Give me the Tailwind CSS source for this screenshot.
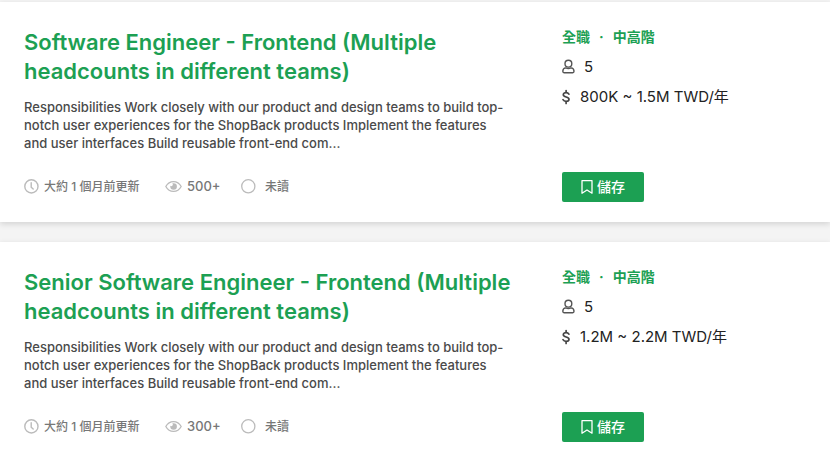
<!DOCTYPE html>
<html lang="zh-Hant">
<head>
  <meta charset="UTF-8" />
  <meta name="viewport" content="width=device-width, initial-scale=1" />
  <title>職缺列表</title>
  <script src="https://cdn.jsdelivr.net/npm/@tailwindcss/browser@4"></script>
</head>
<body class="min-h-screen bg-[#f4f4f4] font-['Inter','Noto_Sans_CJK_TC',sans-serif] text-[#222]">

  <!-- Icons -->
  <svg class="hidden" aria-hidden="true">
    <symbol id="icon-clock" viewBox="0 0 16 16" fill="none" stroke="currentColor" stroke-width="1.4" stroke-linecap="round" stroke-linejoin="round">
      <circle cx="7.4" cy="7.4" r="6.6" />
      <path d="M7.2 3.8v4.4l2 1.9" />
    </symbol>
    <symbol id="icon-eye" viewBox="0 0 18 16">
      <path d="M.8 7.5C2.6 4.3 5.5 2.6 8.5 2.6s5.9 1.7 7.7 4.9c-1.8 3.2-4.7 4.9-7.7 4.9S2.6 10.7.8 7.5z" fill="none" stroke="currentColor" stroke-width="1.3" stroke-linejoin="round" />
      <path d="M8.6 4.2A3.3 3.3 0 1 1 5.3 7.5c0-.3 0-.5.1-.7a1.3 1.3 0 0 0 1.9-2.3c.4-.2.8-.3 1.3-.3z" fill="currentColor" />
    </symbol>
    <symbol id="icon-circle" viewBox="0 0 16 16" fill="none" stroke="currentColor" stroke-width="1.3">
      <circle cx="8.3" cy="7.3" r="6.6" />
    </symbol>
    <symbol id="icon-user" viewBox="-1 0 14 16" fill="none" stroke="currentColor" stroke-width="1.4" stroke-linejoin="round">
      <circle cx="5.4" cy="4.7" r="3.4" />
      <path d="M2.8 8.9C.5 9.1-.2 10.5-.2 12.3c0 .9.4 1.4 1.2 1.4h8.8c.8 0 1.2-.5 1.2-1.4 0-1.800-.7-3.200-3-3.400-1.600.8-3.600.8-5.200 0z" />
    </symbol>
    <symbol id="icon-dollar" viewBox="-1 0 10 16" fill="none" stroke="currentColor" stroke-width="1.7" stroke-linecap="round" stroke-linejoin="round">
      <path d="M5.9 5.2C5.3 4.1 4.4 3.6 3.1 3.6 1.500 3.6.3 4.4.3 5.7c0 3 5.700 1.500 5.700 4.500 0 1.300-1.200 2.200-2.900 2.200-1.500 0-2.500-.6-3.100-1.700M3.100 1.600v2M3.100 12.400v2" />
    </symbol>
    <symbol id="icon-bookmark" viewBox="0 0 12 16" fill="none" stroke="currentColor" stroke-width="1.3" stroke-linejoin="round">
      <path d="M1 1.6h10v12.600l-5-3.200-5 3.200z" />
    </symbol>
  </svg>

  <main class="flex flex-col gap-5 pt-0.5">

    <article class="flex gap-10 bg-white px-6 pt-[26px] pb-5 shadow-[0_2px_6px_rgba(0,0,0,0.14)]">
      <div class="flex flex-1 flex-col">
        <h2 class="text-[22px] leading-[29px] font-semibold text-[#1ca053]"><a href="#">Software Engineer - Frontend (Multiple<br>headcounts in different teams)</a></h2>
        <p class="mt-3 text-[13px] leading-[18px] font-medium whitespace-nowrap text-[#4a4a4a]">Responsibilities Work closely with our product and design teams to build top-<br>notch user experiences for the ShopBack products Implement the features<br>and user interfaces Build reusable front-end com...</p>
        <ul class="mt-auto flex h-[30px] items-center text-xs font-medium text-[#777]">
          <li class="flex w-[141px] items-center gap-1"><svg class="size-4 text-[#bbb]"><use href="#icon-clock" /></svg>大約 1 個月前更新</li>
          <li class="flex w-[75px] items-center gap-1 text-[13px]"><svg class="h-4 w-[18px] text-[#bbb]"><use href="#icon-eye" /></svg>500+</li>
          <li class="flex items-center gap-[9px]"><svg class="size-4 text-[#bbb]"><use href="#icon-circle" /></svg>未讀</li>
        </ul>
      </div>
      <div class="flex w-61 flex-col items-start text-[15px]">
        <p class="flex h-[18px] items-center gap-[9px] text-sm font-bold text-[#1ca053]"><span>全職</span><span>·</span><span>中高階</span></p>
        <p class="mt-3 flex h-[18px] items-center gap-2"><svg class="h-4 w-3.5 text-[#555]"><use href="#icon-user" /></svg>5</p>
        <p class="mt-3 flex h-[18px] items-center gap-2"><svg class="h-4 w-2.5 text-[#444]"><use href="#icon-dollar" /></svg>800K ~ 1.5M TWD/年</p>
        <button type="button" class="mt-[66px] flex h-[30px] items-center gap-1 rounded-xs bg-[#1ca053] px-[19px] text-sm font-medium text-white"><svg class="h-4 w-3"><use href="#icon-bookmark" /></svg>儲存</button>
      </div>
    </article>

    <article class="flex gap-10 bg-white px-6 pt-[26px] pb-5 shadow-[0_2px_6px_rgba(0,0,0,0.14)]">
      <div class="flex flex-1 flex-col">
        <h2 class="text-[22px] leading-[29px] font-semibold text-[#1ca053]"><a href="#">Senior Software Engineer - Frontend (Multiple<br>headcounts in different teams)</a></h2>
        <p class="mt-3 text-[13px] leading-[18px] font-medium whitespace-nowrap text-[#4a4a4a]">Responsibilities Work closely with our product and design teams to build top-<br>notch user experiences for the ShopBack products Implement the features<br>and user interfaces Build reusable front-end com...</p>
        <ul class="mt-auto flex h-[30px] items-center text-xs font-medium text-[#777]">
          <li class="flex w-[141px] items-center gap-1"><svg class="size-4 text-[#bbb]"><use href="#icon-clock" /></svg>大約 1 個月前更新</li>
          <li class="flex w-[75px] items-center gap-1 text-[13px]"><svg class="h-4 w-[18px] text-[#bbb]"><use href="#icon-eye" /></svg>300+</li>
          <li class="flex items-center gap-[9px]"><svg class="size-4 text-[#bbb]"><use href="#icon-circle" /></svg>未讀</li>
        </ul>
      </div>
      <div class="flex w-61 flex-col items-start text-[15px]">
        <p class="flex h-[18px] items-center gap-[9px] text-sm font-bold text-[#1ca053]"><span>全職</span><span>·</span><span>中高階</span></p>
        <p class="mt-3 flex h-[18px] items-center gap-2"><svg class="h-4 w-3.5 text-[#555]"><use href="#icon-user" /></svg>5</p>
        <p class="mt-3 flex h-[18px] items-center gap-2"><svg class="h-4 w-2.5 text-[#444]"><use href="#icon-dollar" /></svg>1.2M ~ 2.2M TWD/年</p>
        <button type="button" class="mt-[66px] flex h-[30px] items-center gap-1 rounded-xs bg-[#1ca053] px-[19px] text-sm font-medium text-white"><svg class="h-4 w-3"><use href="#icon-bookmark" /></svg>儲存</button>
      </div>
    </article>

  </main>

</body>
</html>
